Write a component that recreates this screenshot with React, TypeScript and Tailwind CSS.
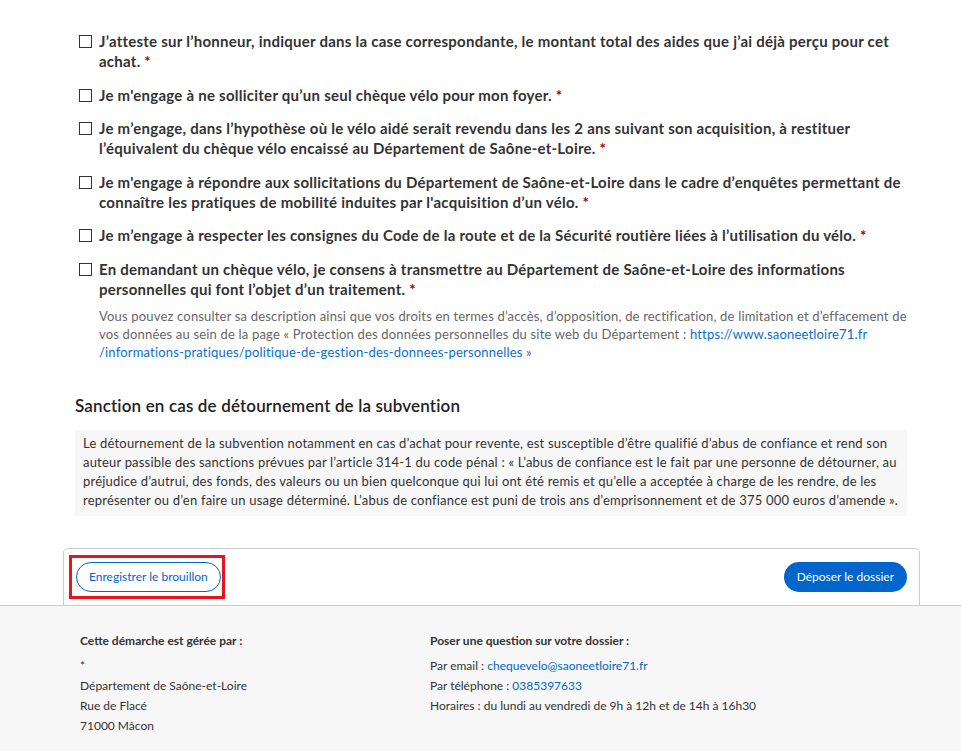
import React from "react";

const Star = () => <span className="text-[#a10005]"> *</span>;

const items: React.ReactNode[][] = [
  [
    "J’atteste sur l’honneur, indiquer dans la case correspondante, le montant total des aides que j’ai déjà perçu pour cet",
    "achat.",
  ],
  ["Je m'engage à ne solliciter qu’un seul chèque vélo pour mon foyer."],
  [
    "Je m’engage, dans l’hypothèse où le vélo aidé serait revendu dans les 2 ans suivant son acquisition, à restituer",
    "l’équivalent du chèque vélo encaissé au Département de Saône-et-Loire.",
  ],
  [
    "Je m'engage à répondre aux sollicitations du Département de Saône-et-Loire dans le cadre d’enquêtes permettant de",
    "connaître les pratiques de mobilité induites par l'acquisition d’un vélo.",
  ],
  ["Je m’engage à respecter les consignes du Code de la route et de la Sécurité routière liées à l’utilisation du vélo."],
  [
    "En demandant un chèque vélo, je consens à transmettre au Département de Saône-et-Loire des informations",
    "personnelles qui font l’objet d’un traitement.",
  ],
];

function CheckItem({ lines, children }: { lines: React.ReactNode[]; children?: React.ReactNode }) {
  return (
    <div className="flex items-start pl-[4px]">
      <div className="mt-[4px] h-[13px] w-[13px] shrink-0 border border-[#333] bg-white" />
      <div className="ml-[7px] flex-1">
        <div className="text-[15px] font-bold leading-[20px] tracking-[0.25px] text-[#333] whitespace-nowrap">
          {lines.map((l, i) => (
            <div key={i}>
              {l}
              {i === lines.length - 1 && <Star />}
            </div>
          ))}
        </div>
        {children}
      </div>
    </div>
  );
}

export default function App() {
  return (
    <div className="min-h-[751px] bg-white font-['Lato','Liberation_Sans',sans-serif] text-[#333]">
      <div className="ml-[75px] w-[832px] pt-[31px]">
        <div className="flex flex-col gap-[13.5px]">
          {items.map((lines, i) => (
            <CheckItem key={i} lines={lines}>
              {i === items.length - 1 && (
                <div className="mt-[8px] text-[13px] leading-[18px] tracking-[0.18px] text-[#666] whitespace-nowrap">
                  <div>
                    Vous pouvez consulter sa description ainsi que vos droits en termes d’accès, d’opposition, de
                    rectification, de limitation et d’effacement de
                  </div>
                  <div>
                    vos données au sein de la page « Protection des données personnelles du site web du Département :{" "}
                    <a className="text-[#0a6ecc]">https://www.saoneetloire71.fr</a>
                  </div>
                  <div>
                    <a className="text-[#0a6ecc]">/informations-pratiques/politique-de-gestion-des-donnees-personnelles</a> »
                  </div>
                </div>
              )}
            </CheckItem>
          ))}
        </div>

        <h2 className="mt-[33px] text-[17px] font-semibold leading-[24px] tracking-[0.15px] text-[#222]">
          Sanction en cas de détournement de la subvention
        </h2>
        <div className="mt-[12px] bg-[#f7f7f7] pl-[8px] pr-[6px] pt-[4px] pb-[6px] text-[13px] leading-[19px] tracking-[0.2px] text-[#333] whitespace-nowrap">
          <div>
            Le détournement de la subvention notamment en cas d’achat pour revente, est susceptible d’être qualifié
            d’abus de confiance et rend son
          </div>
          <div>
            auteur passible des sanctions prévues par l’article 314-1 du code pénal : « L’abus de confiance est le fait
            par une personne de détourner, au
          </div>
          <div>
            préjudice d’autrui, des fonds, des valeurs ou un bien quelconque qui lui ont été remis et qu’elle a acceptée
            à charge de les rendre, de les
          </div>
          <div>
            représenter ou d’en faire un usage déterminé. L’abus de confiance est puni de trois ans d’emprisonnement et
            de 375 000 euros d’amende ».
          </div>
        </div>
      </div>

      <div className="ml-[63px] mt-[32px] flex w-[857px] items-center justify-between rounded-t-[5px] border border-b-0 border-[#ccc] pl-[12px] pr-[12px] pt-[13px] pb-[13px]">
        <div className="-my-[7px] -ml-[7px] border-[3px] border-[#e8141c] py-[4px] pl-[4px] pr-[1px]">
          <button className="h-[30px] rounded-full border border-[#0066cc] bg-white px-[12px] text-[12px] text-[#0066cc]">
            Enregistrer le brouillon
          </button>
        </div>
        <button className="h-[30px] rounded-full bg-[#0066cc] px-[13px] text-[12px] text-white">
          Déposer le dossier
        </button>
      </div>

      <footer className="border-t border-[#ccc] bg-[#f7f7f7] pt-[25px] pb-[20px] text-[12px] leading-[20px] text-[#333]">
        <div className="flex">
          <div className="ml-[80px] w-[350px]">
            <div className="font-bold">Cette démarche est gérée par :</div>
            <div className="mt-[5px]">*</div>
            <div>Département de Saône-et-Loire</div>
            <div>Rue de Flacé</div>
            <div>71000 Mâcon</div>
          </div>
          <div>
            <div className="font-bold">Poser une question sur votre dossier :</div>
            <div className="mt-[5px]">
              Par email : <a className="text-[#0066cc]">chequevelo@saoneetloire71.fr</a>
            </div>
            <div>
              Par téléphone : <a className="text-[#0066cc]">0385397633</a>
            </div>
            <div>Horaires : du lundi au vendredi de 9h à 12h et de 14h à 16h30</div>
          </div>
        </div>
      </footer>
    </div>
  );
}
